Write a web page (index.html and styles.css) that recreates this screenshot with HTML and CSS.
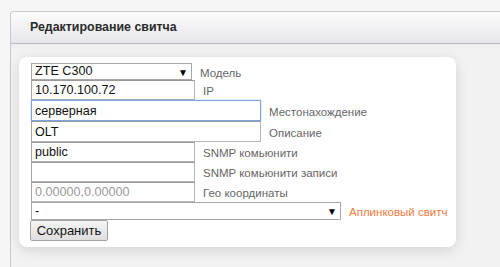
FILE: index.html
```html
<!DOCTYPE html>
<html lang="ru">
<head>
  <meta charset="UTF-8">
  <title>Редактирование свитча</title>
  <link rel="stylesheet" href="styles.css">
</head>
<body>
  <div class="panel">
    <div class="panel-head">Редактирование свитча</div>

    <div class="panel-body">
      <form class="card">
        <div class="row">
          <div class="select-wrap small">
            <select class="select">
              <option>ZTE C300</option>
            </select>
          </div>
          <label class="label label-select">Модель</label>
        </div>

        <div class="row">
          <input class="field short" type="text" value="10.170.100.72">
          <label class="label">IP</label>
        </div>

        <div class="row">
          <input class="field wide focus" type="text" value="серверная">
          <label class="label">Местонахождение</label>
        </div>

        <div class="row">
          <input class="field wide" type="text" value="OLT">
          <label class="label">Описание</label>
        </div>

        <div class="row">
          <input class="field short" type="text" value="public">
          <label class="label">SNMP комьюнити</label>
        </div>

        <div class="row">
          <input class="field short" type="text" value="">
          <label class="label">SNMP комьюнити записи</label>
        </div>

        <div class="row">
          <input class="field short" type="text" placeholder="0.00000,0.00000">
          <label class="label">Гео координаты</label>
        </div>

        <div class="row">
          <div class="select-wrap large">
            <select class="select">
              <option>-</option>
            </select>
          </div>
          <label class="label label-select uplink">Аплинковый свитч</label>
        </div>

        <div class="row">
          <button type="button" class="btn">Сохранить</button>
        </div>
      </form>
    </div>
  </div>
</body>
</html>
```

FILE: styles.css
```css
* {
  box-sizing: border-box;
}

html, body {
  margin: 0;
  height: 100%;
}

body {
  background: #f6f6f6;
  font-family: "Liberation Sans", Arial, sans-serif;
  color: #333;
  padding-top: 11px;
  overflow: hidden;
}

/* Panel */
.panel {
  margin-left: 10px;
  height: 100%;
  border: 1px solid #c9c9ce;
  border-right: none;
  border-bottom: none;
  border-radius: 4px 0 0 0;
  background: #f2f2f2;
}

.panel-head {
  height: 32px;
  line-height: 31px;
  padding-left: 19px;
  font-size: 12.4px;
  font-weight: bold;
  color: #2b2b2b;
  background: linear-gradient(#fdfdfd, #e6e6ea);
  border-bottom: 1px solid #b9b9c3;
  border-radius: 4px 0 0 0;
}

.panel-body {
  padding: 13px 0 0 8px;
  background: linear-gradient(#ececec, #f2f2f2 6px);
}

/* Form card */
.card {
  width: 437px;
  padding: 6px 0 6px 12px;
  background: #fff;
  border-radius: 8px;
  box-shadow: 0 3px 14px rgba(0, 0, 0, 0.13);
}

.row {
  display: flex;
  align-items: center;
}

.label {
  margin-left: 8px;
  font-size: 11.5px;
  color: #666;
  padding-top: 2px;
}

.uplink {
  color: #f47a3c;
}

/* Inputs */
.field {
  height: 20px;
  margin: 0;
  padding: 0 3px;
  font-family: inherit;
  font-size: 12.6px;
  color: #111;
  border: 1px solid #b5b5b5;
  border-top-color: #999;
  border-left-color: #a5a5a5;
  outline: none;
}

.field::placeholder {
  color: #999;
}

.short {
  width: 164px;
}

.wide {
  width: 230px;
  height: 21px;
}

.focus {
  border: 1px solid #7ea6dd;
  box-shadow: 0 0 2px rgba(90, 140, 220, 0.5);
}

/* Selects */
.select-wrap {
  position: relative;
}

.select-wrap::after {
  content: "\25BC";
  position: absolute;
  right: 4px;
  top: 50%;
  transform: translateY(-50%);
  font-size: 10px;
  color: #000;
  pointer-events: none;
}

.select {
  display: block;
  width: 100%;
  margin: 0;
  padding: 0 3px;
  font-family: inherit;
  font-size: 12.6px;
  color: #111;
  background: #fff;
  border: 1px solid #a8a8a8;
  border-radius: 0;
  appearance: none;
  -webkit-appearance: none;
  outline: none;
}

.small {
  width: 161px;
}

.small .select {
  height: 17px;
  line-height: 15px;
}

.large {
  width: 310px;
}

.large .select {
  height: 18px;
}

/* Button */
.btn {
  width: 78px;
  height: 21px;
  margin: 0 0 0 -1px;
  padding: 0;
  font-family: inherit;
  font-size: 13px;
  color: #111;
  background: linear-gradient(#f4f4f4, #dedede);
  border: 1px solid #a3a3a3;
  border-radius: 2px;
}
```
